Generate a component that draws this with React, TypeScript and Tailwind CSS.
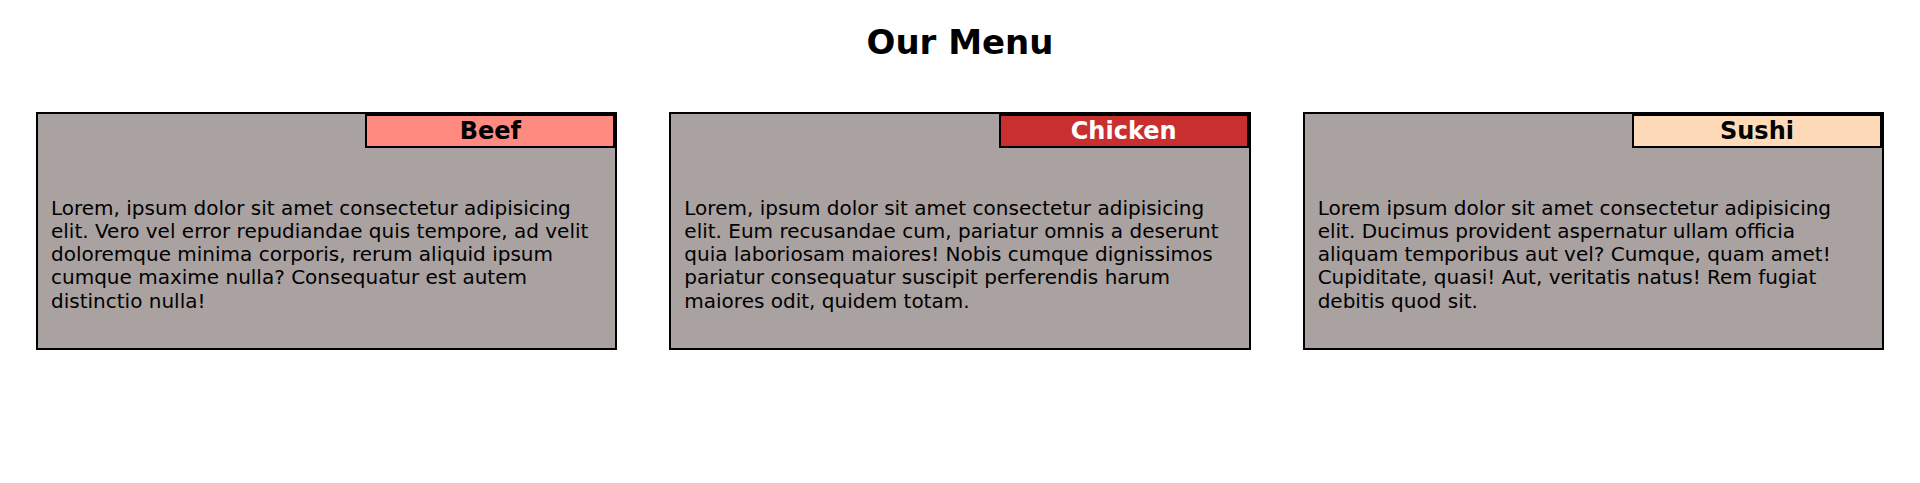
const items = [
  {
    name: "Beef",
    tag: "bg-[#ff8a80] text-black",
    text: "Lorem, ipsum dolor sit amet consectetur adipisicing elit. Vero vel error repudiandae quis tempore, ad velit doloremque minima corporis, rerum aliquid ipsum cumque maxime nulla? Consequatur est autem distinctio nulla!",
  },
  {
    name: "Chicken",
    tag: "bg-[#c92f2f] text-white",
    text: "Lorem, ipsum dolor sit amet consectetur adipisicing elit. Eum recusandae cum, pariatur omnis a deserunt quia laboriosam maiores! Nobis cumque dignissimos pariatur consequatur suscipit perferendis harum maiores odit, quidem totam.",
  },
  {
    name: "Sushi",
    tag: "bg-[#ffdab9] text-black",
    text: "Lorem ipsum dolor sit amet consectetur adipisicing elit. Ducimus provident aspernatur ullam officia aliquam temporibus aut vel? Cumque, quam amet! Cupiditate, quasi! Aut, veritatis natus! Rem fugiat debitis quod sit.",
  },
];

function MenuCard({ name, tag, text }: { name: string; tag: string; text: string }) {
  return (
    <section className="flex flex-col h-[238px] border-2 border-black bg-[#aaa2a0]">
      <div className="flex justify-end">
        <h2 className={`flex items-center justify-center w-[250px] h-[34px] border-2 border-black text-[24px] font-bold leading-none ${tag}`}>
          {name}
        </h2>
      </div>
      <p className="pt-[49px] pl-[13px] pr-[20px] text-[20px] leading-[1.164] text-black">{text}</p>
    </section>
  );
}

export default function App() {
  return (
    <div className="min-h-[483px] bg-white font-['DejaVu_Sans',sans-serif]">
      <h1 className="pt-[23px] text-center text-[34px] font-bold leading-[1.164] text-black">Our Menu</h1>
      <div className="grid grid-cols-3 gap-[52px] px-[36px] mt-[49px]">
        {items.map((item) => (
          <MenuCard key={item.name} {...item} />
        ))}
      </div>
    </div>
  );
}
